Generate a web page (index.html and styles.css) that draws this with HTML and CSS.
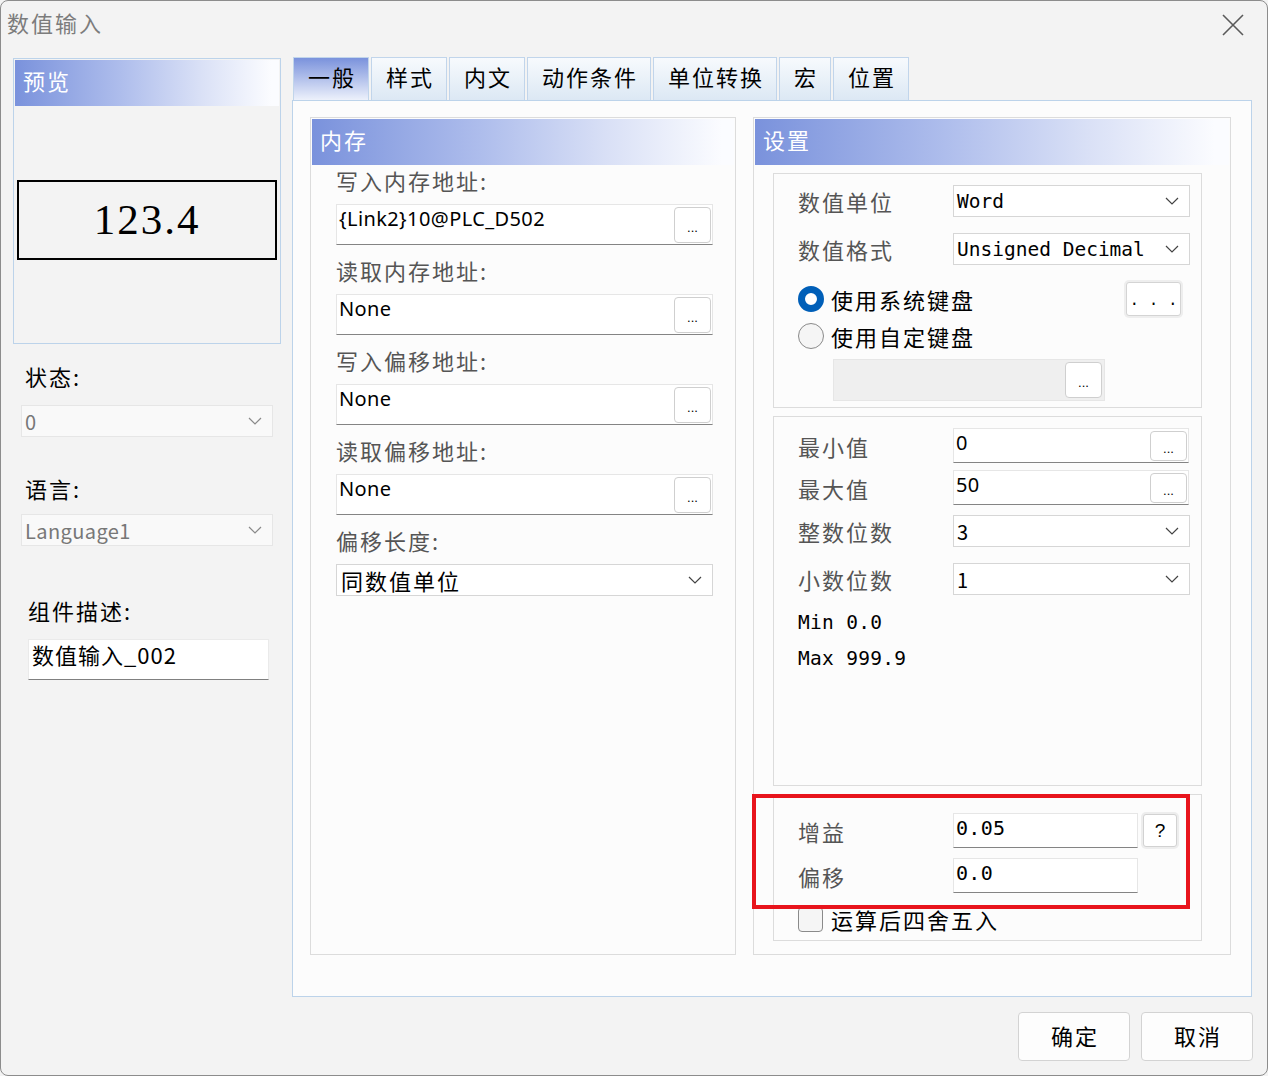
FILE: index.html
```html
<!DOCTYPE html>
<html lang="zh-CN">
<head>
    <meta charset="UTF-8">
    <title>数值输入</title>
    <link rel="stylesheet" href="styles.css">
</head>
<body>

<div class="window">
    <div class="titlebar">
        <span class="title">数值输入</span>
        <svg class="close" width="22" height="22" viewBox="0 0 22 22"><path d="M1 1 L21 21 M21 1 L1 21" stroke="#5a5a5a" stroke-width="1.6" fill="none"/></svg>
    </div>

    <div class="main">
        <aside class="side">
            <div class="preview">
                <div class="band">预览</div>
                <div class="sample">123.4</div>
            </div>

            <div class="side-label">状态:</div>
            <div class="combo dim">
                <span>0</span>
                <svg width="14" height="8" viewBox="0 0 14 8"><polyline points="1,1 7,7 13,1" fill="none" stroke="#8a8a8a" stroke-width="1.2"/></svg>
            </div>

            <div class="side-label lang">语言:</div>
            <div class="combo dim second">
                <span>Language1</span>
                <svg width="14" height="8" viewBox="0 0 14 8"><polyline points="1,1 7,7 13,1" fill="none" stroke="#8a8a8a" stroke-width="1.2"/></svg>
            </div>

            <div class="side-label desc">组件描述:</div>
            <div class="desc-input">数值输入_002</div>
        </aside>

        <section class="tabs-area">
            <div class="tabs">
                <div class="tab active">一般</div>
                <div class="tab">样式</div>
                <div class="tab">内文</div>
                <div class="tab">动作条件</div>
                <div class="tab">单位转换</div>
                <div class="tab">宏</div>
                <div class="tab">位置</div>
            </div>

            <div class="tab-panel">
                <div class="group mem">
                    <div class="band">内存</div>
                    <div class="mem-body">
                        <div class="mem-label">写入内存地址:</div>
                        <div class="field">
                            <span class="val">{Link2}10@PLC_D502</span>
                            <span class="dots">...</span>
                        </div>
                        <div class="mem-label">读取内存地址:</div>
                        <div class="field">
                            <span class="val">None</span>
                            <span class="dots">...</span>
                        </div>
                        <div class="mem-label">写入偏移地址:</div>
                        <div class="field">
                            <span class="val">None</span>
                            <span class="dots">...</span>
                        </div>
                        <div class="mem-label">读取偏移地址:</div>
                        <div class="field">
                            <span class="val">None</span>
                            <span class="dots">...</span>
                        </div>
                        <div class="mem-label">偏移长度:</div>
                        <div class="combo wide">
                            <span>同数值单位</span>
                            <svg width="14" height="8" viewBox="0 0 14 8"><polyline points="1,1 7,7 13,1" fill="none" stroke="#444" stroke-width="1.2"/></svg>
                        </div>
                    </div>
                </div>

                <div class="group settings">
                    <div class="band">设置</div>

                    <div class="box box-unit">
                        <div class="row first">
                            <span class="lbl">数值单位</span>
                            <div class="combo set mono">
                                <span>Word</span>
                                <svg width="14" height="8" viewBox="0 0 14 8"><polyline points="1,1 7,7 13,1" fill="none" stroke="#444" stroke-width="1.2"/></svg>
                            </div>
                        </div>
                        <div class="row second">
                            <span class="lbl">数值格式</span>
                            <div class="combo set mono">
                                <span>Unsigned Decimal</span>
                                <svg width="14" height="8" viewBox="0 0 14 8"><polyline points="1,1 7,7 13,1" fill="none" stroke="#444" stroke-width="1.2"/></svg>
                            </div>
                        </div>
                        <div class="radio-row sys">
                            <span class="radio on"></span>
                            <span class="radio-text">使用系统键盘</span>
                            <span class="kb-btn">. . .</span>
                        </div>
                        <div class="radio-row custom">
                            <span class="radio"></span>
                            <span class="radio-text">使用自定键盘</span>
                        </div>
                        <div class="disabled-field">
                            <span class="dots">...</span>
                        </div>
                    </div>

                    <div class="box box-range">
                        <div class="row in-row first">
                            <span class="lbl">最小值</span>
                            <div class="field set">
                                <span class="val">0</span>
                                <span class="dots">...</span>
                            </div>
                        </div>
                        <div class="row in-row">
                            <span class="lbl">最大值</span>
                            <div class="field set">
                                <span class="val">50</span>
                                <span class="dots">...</span>
                            </div>
                        </div>
                        <div class="row int">
                            <span class="lbl">整数位数</span>
                            <div class="combo set">
                                <span>3</span>
                                <svg width="14" height="8" viewBox="0 0 14 8"><polyline points="1,1 7,7 13,1" fill="none" stroke="#444" stroke-width="1.2"/></svg>
                            </div>
                        </div>
                        <div class="row second">
                            <span class="lbl">小数位数</span>
                            <div class="combo set">
                                <span>1</span>
                                <svg width="14" height="8" viewBox="0 0 14 8"><polyline points="1,1 7,7 13,1" fill="none" stroke="#444" stroke-width="1.2"/></svg>
                            </div>
                        </div>
                        <div class="limit first-limit">Min 0.0</div>
                        <div class="limit">Max 999.9</div>
                    </div>

                    <div class="box box-gain">
                        <div class="row gain-row first">
                            <span class="lbl">增益</span>
                            <div class="field gain"><span class="val mono">0.05</span></div>
                            <span class="help">?</span>
                        </div>
                        <div class="row gain-row">
                            <span class="lbl">偏移</span>
                            <div class="field gain"><span class="val mono">0.0</span></div>
                        </div>
                        <div class="check-row">
                            <span class="check"></span>
                            <span class="radio-text">运算后四舍五入</span>
                        </div>
                    </div>

                    <div class="highlight"></div>
                </div>
            </div>
        </section>
    </div>

    <div class="footer">
        <button class="btn">确定</button>
        <button class="btn">取消</button>
    </div>
</div>

</body>
</html>
```

FILE: styles.css
```css
* {
    box-sizing: border-box;
}
body {
    margin: 0;
    background-color: #f3f3f3;
    font-family: "Noto Sans CJK SC", sans-serif;
    font-size: 22px;
    letter-spacing: 2px;
    color: #000;
}
.window {
    width: 1268px;
    height: 1076px;
    border: 1px solid #8c8c8c;
    border-radius: 8px;
    background-color: #f3f3f3;
    overflow: hidden;
}
.titlebar {
    height: 56px;
    display: flex;
    justify-content: space-between;
    padding: 6px 23px 0 6px;
}
.title {
    color: #7c7c7c;
    font-size: 22px;
    line-height: 30px;
}
.close {
    margin-top: 7px;
}
.main {
    display: flex;
    gap: 11px;
    padding-left: 12px;
}

/* left column */
.side {
    width: 268px;
}
.preview {
    margin-top: 1px;
    height: 286px;
    border: 1px solid #bcd3ea;
    padding: 1px;
}
.band {
    height: 46px;
    line-height: 40px;
    padding-left: 8px;
    color: #fff;
    font-size: 22px;
    background: linear-gradient(to right, #7a92dc, #aebdec 40%, #d9e0f6 70%, #fbfcff 97%);
}
.sample {
    margin: 74px 0 0 2px;
    width: 260px;
    height: 80px;
    border: 2.5px solid #000;
    text-align: center;
    font-family: "Liberation Serif", serif;
    font-size: 43px;
    letter-spacing: 2px;
    line-height: 76px;
}
.side-label {
    margin-top: 19px;
    padding: 0 0 4px 12px;
    line-height: 26px;
}
.side-label.lang {
    margin-top: 38px;
}
.side-label.desc {
    margin-top: 51px;
    padding-left: 15px;
}
.combo {
    display: flex;
    justify-content: space-between;
    align-items: center;
    height: 32px;
    background-color: #fff;
    border: 1px solid #d6d6d6;
    padding: 0 10px 0 4px;
    font-size: 20px;
    letter-spacing: 0.4px;
}
.combo.dim {
    margin: 12px 0 0 8px;
    width: 252px;
    background-color: #f9f9f9;
    border-color: #e6e6e6;
    color: #777;
    padding-left: 3px;
}
.combo.dim.second {
    margin-top: 9px;
}
.desc-input {
    margin: 12px 0 0 15px;
    width: 241px;
    height: 41px;
    background-color: #fff;
    border: 1px solid #eaeaea;
    border-bottom-color: #808080;
    padding-left: 3px;
    line-height: 28px;
    letter-spacing: 1px;
}

/* tabs */
.tabs-area {
    width: 960px;
}
.tabs {
    display: flex;
    height: 43px;
    padding-left: 1px;
}
.tab {
    padding: 0 12px 0 14px;
    margin-right: 2px;
    border: 1px solid #c1d5eb;
    border-bottom: none;
    line-height: 37px;
    background: linear-gradient(to bottom, #f7fafd, #dce8f4);
}
.tab.active {
    background: linear-gradient(to bottom, #7a92dc, #edf1fb);
}
.tab-panel {
    height: 897px;
    border: 1px solid #bcd3ea;
    background-color: #fcfcfc;
    display: flex;
    gap: 17px;
    padding: 16px 0 0 17px;
}
.group {
    height: 838px;
    border: 1px solid #dcdcdc;
    padding: 1px;
}
.group.mem {
    width: 426px;
}
.group.settings {
    width: 478px;
    position: relative;
}

/* memory group */
.mem-body {
    padding: 3px 0 0 24px;
}
.mem-label {
    color: #555;
    line-height: 24px;
    padding-bottom: 6px;
    margin-top: 13px;
}
.mem-label:first-child {
    margin-top: 0;
}
.field {
    display: flex;
    justify-content: space-between;
    height: 41px;
    width: 377px;
    margin-top: 6px;
    background-color: #fff;
    border: 1px solid #e6e6e6;
    border-bottom-color: #848484;
    font-family: "Noto Sans", "Noto Sans CJK SC", sans-serif;
    letter-spacing: 0.4px;
}
.field .val {
    padding: 1px 0 0 2px;
    font-size: 20px;
    line-height: 26px;
}
.field .dots {
    width: 37px;
    height: 36px;
    margin: 2px 1px 0 0;
}
.dots {
    display: block;
    background-color: #fff;
    border: 1px solid #cfcfcf;
    border-radius: 4px;
    font-size: 13px;
    line-height: 40px;
    letter-spacing: 0;
    text-align: center;
    font-family: "Liberation Sans", sans-serif;
}
.combo.wide {
    width: 377px;
    margin-top: 6px;
    color: #000;
    font-size: 22px;
    letter-spacing: 2px;
}

/* settings group */
.box {
    margin: 8px 0 0 18px;
    width: 429px;
    border: 1px solid #dcdcdc;
    padding: 0 11px 0 24px;
}
.box-range {
    height: 370px;
}
.row {
    display: flex;
    align-items: center;
    margin-top: 16px;
}
.row.first {
    margin-top: 11px;
}
.lbl {
    width: 155px;
    color: #555;
    line-height: 28px;
}
.combo.set {
    width: 237px;
    padding-left: 3px;
    color: #000;
}
.mono {
    font-family: "DejaVu Sans Mono", "Liberation Mono", monospace;
    font-size: 19px;
    letter-spacing: 0.3px;
}
.combo.mono {
    font-size: 19.5px;
    letter-spacing: 0;
}
.radio-row {
    display: flex;
    align-items: center;
    height: 30px;
    margin-top: 5px;
}
.radio-row.sys {
    height: 34px;
    margin-top: 17px;
}
.radio {
    width: 26px;
    height: 26px;
    border-radius: 50%;
    border: 1.5px solid #8a8a8a;
    background-color: #f5f5f5;
    margin-right: 7px;
}
.radio.on {
    border: 7.5px solid #005fb8;
    background-color: #fff;
}
.radio-text {
    line-height: 28px;
}
.kb-btn {
    margin-left: auto;
    margin-right: 9px;
    width: 55px;
    height: 34px;
    background-color: #fff;
    border: 1px solid #d4d4d4;
    box-shadow: 0 0 0 2px #eeeeee;
    border-radius: 3px;
    font-family: "Liberation Mono", monospace;
    font-size: 16px;
    letter-spacing: 0;
    line-height: 36px;
    text-align: center;
}
.disabled-field {
    display: flex;
    justify-content: flex-end;
    margin: 8px 0 6px 35px;
    width: 272px;
    height: 42px;
    background-color: #efefef;
    border: 1px solid #e6e6e6;
    padding: 2px 2px 0 0;
}
.disabled-field .dots {
    width: 37px;
    height: 36px;
}
.row.in-row {
    margin-top: 7px;
}
.row.in-row.first {
    margin-top: 11px;
}
.field.set {
    width: 236px;
    height: 35px;
    margin-top: 0;
}
.field.set .dots {
    height: 30px;
    line-height: 34px;
}
.row.int {
    margin-top: 10px;
}
.limit {
    font-family: "DejaVu Sans Mono", "Liberation Mono", monospace;
    font-size: 19.5px;
    letter-spacing: 0.3px;
    line-height: 26px;
    margin-top: 10px;
}
.limit.first-limit {
    margin-top: 15px;
}
.box-gain {
    padding-bottom: 8px;
}
.row.gain-row {
    margin-top: 10px;
}
.row.gain-row.first {
    margin-top: 18px;
}
.field.gain {
    width: 185px;
    height: 35px;
    margin-top: 0;
}
.help {
    width: 34px;
    height: 33px;
    margin-left: 5px;
    background-color: #fff;
    border: 1px solid #d2d2d2;
    box-shadow: 0 0 0 2px #ededed;
    border-radius: 3px;
    text-align: center;
    font-family: "Liberation Sans", sans-serif;
    font-size: 19px;
    letter-spacing: 0;
    line-height: 32px;
}
.check-row {
    display: flex;
    align-items: center;
    margin-top: 13px;
    height: 26px;
}
.check {
    width: 25px;
    height: 25px;
    border: 1.5px solid #8a8a8a;
    border-radius: 4px;
    background-color: #f5f5f5;
    margin-right: 8px;
}
.highlight {
    position: absolute;
    left: -2px;
    top: 676px;
    width: 438px;
    height: 115px;
    border: 4px solid #e8141c;
}

/* footer */
.footer {
    display: flex;
    justify-content: flex-end;
    gap: 11px;
    padding: 15px 14px 0 0;
}
.btn {
    width: 112px;
    height: 49px;
    background-color: #fdfdfd;
    border: 1px solid #d3d3d3;
    border-radius: 4px;
    font-family: "Noto Sans CJK SC", sans-serif;
    font-size: 22px;
    letter-spacing: 2px;
    padding: 0 0 3px 2px;
    color: #000;
}
```
